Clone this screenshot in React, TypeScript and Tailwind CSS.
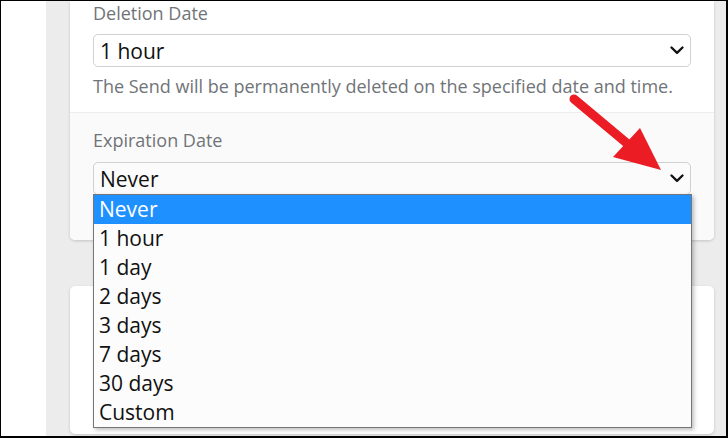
import React from "react";

function Chevron() {
  return (
    <svg width="14" height="9" viewBox="0 0 14 9" className="shrink-0">
      <polyline points="1.5,1.5 7,6.8 12.5,1.5" fill="none" stroke="#111" strokeWidth="2.3" strokeLinecap="round" strokeLinejoin="round" />
    </svg>
  );
}

const options = ["Never", "1 hour", "1 day", "2 days", "3 days", "7 days", "30 days", "Custom"];

export default function App() {
  return (
    <div
      className="relative w-[728px] h-[438px] overflow-hidden bg-white border-t border-l border-r-2 border-b-2 border-black flex"
      style={{ fontFamily: '"Open Sans", "Noto Sans", sans-serif' }}
    >
      <div className="w-[45px] bg-white shrink-0" />
      <div className="flex-1 bg-[#ececec] pl-[24px] pr-[12px] flex flex-col gap-[46px]">
        <div className="bg-white rounded-b-[5px] shadow-[0_1px_3px_rgba(0,0,0,0.18)] flex flex-col">
          <div className="px-[23px] pb-[14px]">
            <div className="text-[18px] leading-[24px] text-[#707478]">Deletion Date</div>
            <div className="mt-[9px] h-[33px] border border-[#cfd2d4] rounded-[5px] bg-white flex items-center pl-[6px] pr-[6px] justify-between">
              <span className="text-[21px] leading-[28px] text-[#111]">1 hour</span>
              <Chevron />
            </div>
            <div className="mt-[7px] text-[18px] leading-[24px] text-[#707478] whitespace-nowrap">
              The Send will be permanently deleted on the specified date and time.
            </div>
          </div>
          <div className="border-t border-[#ededed] bg-[#fafafa] px-[23px] pt-[15px] pb-[45px] rounded-b-[5px]">
            <div className="text-[18px] leading-[24px] text-[#707478]">Expiration Date</div>
            <div className="mt-[10px] h-[33px] border border-[#cfd2d4] rounded-[5px] bg-[#fbfbfb] flex items-center pl-[6px] pr-[6px] justify-between">
              <span className="text-[21px] leading-[28px] text-[#111]">Never</span>
              <Chevron />
            </div>
          </div>
        </div>
        <div className="flex-1 mb-[2px] bg-white rounded-[5px] shadow-[0_1px_3px_rgba(0,0,0,0.18)]" />
      </div>

      <div className="absolute left-[92px] top-[193px] w-[599px] h-[234px] border border-[#767676] bg-[#fcfcfc] shadow-[2px_2px_4px_rgba(0,0,0,0.25)] flex flex-col">
        {options.map((o, i) => (
          <div
            key={o}
            className={
              i === 0
                ? "h-[29px] shrink-0 bg-[#1e90ff] text-white text-[21px] leading-[29px] pl-[5px]"
                : "h-[29px] shrink-0 text-[#111] text-[21px] leading-[29px] pl-[5px]"
            }
          >
            {o}
          </div>
        ))}
      </div>

      <svg className="absolute left-0 top-0 pointer-events-none" width="728" height="438" viewBox="-1 -1 728 438">
        <line x1="572" y1="97" x2="627" y2="143" stroke="#ec1c24" strokeWidth="9" strokeLinecap="round" />
        <polygon points="611,155 638,126 659,168" fill="#ec1c24" />
      </svg>
    </div>
  );
}
